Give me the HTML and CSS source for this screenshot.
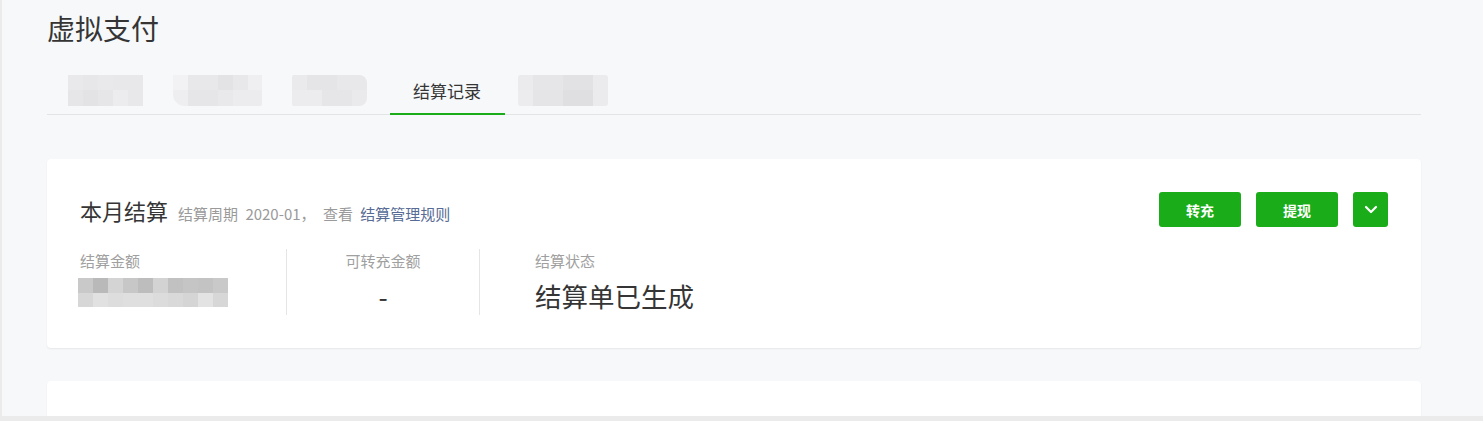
FILE: index.html
```html
<!DOCTYPE html>
<html lang="zh-CN">

<head>
    <meta charset="UTF-8">
    <meta name="viewport" content="width=device-width, initial-scale=1.0">
    <title>虚拟支付</title>
    <link rel="stylesheet" href="styles.css">
</head>

<body>
    <div class="page">
        <h1 class="page-title">虚拟支付</h1>

        <div class="tabs">
            <div class="tab tab-first"><span class="mosaic mosaic-a"></span></div>
            <div class="tab"><span class="mosaic mosaic-b"></span></div>
            <div class="tab"><span class="mosaic mosaic-c"></span></div>
            <div class="tab active">结算记录</div>
            <div class="tab tab-last"><span class="mosaic mosaic-d"></span></div>
        </div>

        <div class="card">
            <div class="card-head">
                <div class="card-title">
                    <h2>本月结算</h2>
                    <span class="desc">结算周期 2020-01， 查看 <a href="#">结算管理规则</a></span>
                </div>
                <div class="actions">
                    <button class="btn">转充</button>
                    <button class="btn">提现</button>
                    <button class="btn btn-icon">
                        <svg width="14" height="9" viewBox="0 0 14 9">
                            <path d="M2 2 L7 7 L12 2" fill="none" stroke="#fff" stroke-width="2.2" stroke-linecap="round" stroke-linejoin="round"/>
                        </svg>
                    </button>
                </div>
            </div>

            <div class="stats">
                <div class="stat stat-amount">
                    <div class="stat-label">结算金额</div>
                    <div class="stat-value"><span class="mosaic mosaic-value"></span></div>
                </div>
                <div class="stat stat-center">
                    <div class="stat-label">可转充金额</div>
                    <div class="stat-value">-</div>
                </div>
                <div class="stat stat-status">
                    <div class="stat-label">结算状态</div>
                    <div class="stat-value">结算单已生成</div>
                </div>
            </div>
        </div>

        <div class="card card-next"></div>
    </div>
</body>

</html>
```

FILE: styles.css
```css
* {
    box-sizing: border-box;
}

body {
    margin: 0;
    background: #ebebeb;
    font-family: "Noto Sans CJK SC", "Noto Sans", sans-serif;
    color: #353535;
}

.page {
    margin-left: 2px;
    height: 416px;
    overflow: hidden;
    background: #f7f8fa;
    padding: 10px 62px 0 45px;
}

.page-title {
    margin: 0;
    font-size: 28px;
    font-weight: normal;
    line-height: 36px;
}

/* tabs */
.tabs {
    display: flex;
    margin-top: 20px;
    height: 49px;
    border-bottom: 1px solid #e3e4e6;
}

.tab {
    display: flex;
    align-items: center;
    height: 48px;
    font-size: 17px;
    color: #353535;
    margin-left: 30px;
}

.tab-first {
    margin-left: 21px;
}

.tab.active {
    margin-left: 23px;
    padding: 0 24px 0 23px;
    border-bottom: 2px solid #1aad19;
    margin-bottom: -1px;
    height: 49px;
    padding-top: 1px;
}

.tab-last {
    margin-left: 13px;
}

.mosaic {
    display: block;
}

.mosaic-a {
    width: 75px;
    height: 31px;
    background:
        linear-gradient(90deg, #e9e9eb 0 15px, #e7e7e9 15px 30px, #e9e9eb 30px 45px, #e8e8ea 45px 75px) top / 100% 15px no-repeat,
        linear-gradient(90deg, #e6e6e8 0 15px, #e3e3e5 15px 30px, #e6e6e8 30px 45px, #ececee 45px 60px, #e8e8ea 60px 75px) bottom / 100% 16px no-repeat;
}

.mosaic-b {
    width: 89px;
    height: 31px;
    background:
        linear-gradient(90deg, #f2f2f4 0 15px, #e8e8ea 15px 45px, #e3e3e5 45px 60px, #e8e8ea 60px 75px, #efeff1 75px 89px) top / 100% 15px no-repeat,
        linear-gradient(90deg, #eeeef0 0 15px, #e6e6e8 15px 45px, #e9e9eb 45px 60px, #ececee 60px 89px) bottom / 100% 16px no-repeat;
    border-radius: 0 0 2px 12px;
}

.mosaic-c {
    width: 75px;
    height: 31px;
    background:
        linear-gradient(90deg, #eaeaec 0 15px, #e5e5e7 15px 45px, #e8e8ea 45px 75px) top / 100% 15px no-repeat,
        linear-gradient(90deg, #ececee 0 30px, #e6e6e8 30px 60px, #eaeaec 60px 75px) bottom / 100% 16px no-repeat;
    border-radius: 2px 8px 8px 2px;
}

.mosaic-d {
    width: 90px;
    height: 31px;
    background:
        linear-gradient(90deg, #ebebed 0 15px, #e6e6e8 15px 45px, #e2e2e4 45px 75px, #ebebed 75px 90px) top / 100% 15px no-repeat,
        linear-gradient(90deg, #ececee 0 15px, #e5e5e7 15px 45px, #dfdfe1 45px 75px, #ebebed 75px 90px) bottom / 100% 16px no-repeat;
    border-radius: 3px;
}

/* card */
.card {
    margin-top: 44px;
    height: 189px;
    background: #fff;
    border-radius: 4px;
    box-shadow: 0 1px 2px rgba(0, 0, 0, 0.07);
    padding: 33px 33px 33px 33px;
}

.card-next {
    margin-top: 33px;
    height: 80px;
}

.card-head {
    display: flex;
    justify-content: space-between;
    align-items: center;
    height: 35px;
}

.card-title {
    display: flex;
    align-items: baseline;
}

.card-title h2 {
    margin: 0;
    font-size: 22px;
    font-weight: normal;
    color: #353535;
}

.desc {
    margin-left: 10px;
    font-size: 15px;
    color: #9a9a9a;
    word-spacing: 4px;
}

.desc a {
    color: #576b95;
    text-decoration: none;
}

.actions {
    display: flex;
    gap: 15px;
}

.btn {
    width: 82px;
    height: 35px;
    border: none;
    border-radius: 3px;
    background: #1aad19;
    color: #fff;
    font-family: inherit;
    font-size: 14px;
    font-weight: bold;
    cursor: pointer;
}

.btn-icon {
    width: 35px;
    display: flex;
    align-items: center;
    justify-content: center;
    padding: 0;
}

/* stats */
.stats {
    display: flex;
    margin-top: 22px;
    height: 66px;
}

.stat-label {
    font-size: 15px;
    line-height: 24px;
    color: #a0a0a0;
}

.stat-value {
    margin-top: 4px;
    height: 38px;
    font-size: 26.5px;
    line-height: 38px;
    color: #353535;
}

.stat-amount {
    width: 207px;
    border-right: 1px solid #e5e5e5;
}

.stat-center {
    width: 193px;
    border-right: 1px solid #e5e5e5;
    text-align: center;
}

.stat-status {
    padding-left: 55px;
}

.mosaic-value {
    margin: 5px 0 0 -2px;
    width: 150px;
    height: 29px;
    background:
        linear-gradient(90deg, #c9c9c9 0 15px, #b9b9b9 15px 30px, #d4d4d4 30px 45px, #c7c7c7 45px 60px, #bdbdbd 60px 75px, #d3d3d3 75px 90px, #c1c1c1 90px 105px, #c5c5c5 105px 120px, #c3c3c3 120px 135px, #c9c9c9 135px 150px) top / 100% 15px no-repeat,
        linear-gradient(90deg, #d7d7d7 0 15px, #e1e1e1 15px 30px, #dddddd 30px 45px, #dfdfdf 45px 75px, #dcdcdc 75px 90px, #d9d9d9 90px 105px, #d5d5d5 105px 120px, #e3e3e3 120px 135px, #d7d7d7 135px 150px) bottom / 100% 14px no-repeat;
}
```
